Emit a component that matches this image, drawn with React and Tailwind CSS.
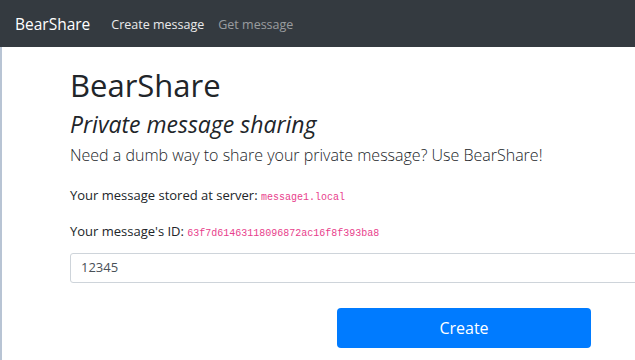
export default function App() {
  return (
    <div className="w-[635px] h-[360px] overflow-hidden bg-white" style={{ fontFamily: '"Open Sans", sans-serif' }}>
      <nav className="h-[47px] bg-[#343a40] flex items-center pl-[15px] pt-[3px]">
        <span className="text-white text-[15.5px] mr-[21px]">BearShare</span>
        <span className="text-white/90 text-[12.5px] mr-[14px]">Create message</span>
        <span className="text-white/50 text-[12.5px]">Get message</span>
      </nav>
      <div className="h-[313px] border-l-2 border-[#b8c4d4] pl-[68px] pt-[18px] text-[#212529]">
        <h1 className="text-[31px] leading-[40px] font-normal">BearShare</h1>
        <h3 className="text-[23px] leading-[30px] italic mt-[4px]">Private message sharing</h3>
        <p className="text-[16px] leading-[24px] font-light mt-[4px]">Need a dumb way to share your private message? Use BearShare!</p>
        <p className="text-[13px] leading-[20px] mt-[18px]">
          Your message stored at server: <code className="text-[10px] text-[#e83e8c]" style={{ fontFamily: '"Liberation Mono", monospace' }}>message1.local</code>
        </p>
        <p className="text-[13px] leading-[20px] mt-[13px]">
          Your message's ID: <code className="text-[10px] text-[#e83e8c]" style={{ fontFamily: '"Liberation Mono", monospace' }}>63f7d61463118096872ac16f8f393ba8</code>
        </p>
        <div className="mt-[9px] w-[600px] h-[30px] border border-[#ced4da] rounded-[3px] flex items-center pl-[10px] text-[13px] text-[#495057]">12345</div>
        <div className="mt-[25px] ml-[267px] w-[254px] h-[40px] bg-[#007bff] rounded-[4px] flex items-center justify-center text-white text-[16px]">Create</div>
      </div>
    </div>
  );
}
